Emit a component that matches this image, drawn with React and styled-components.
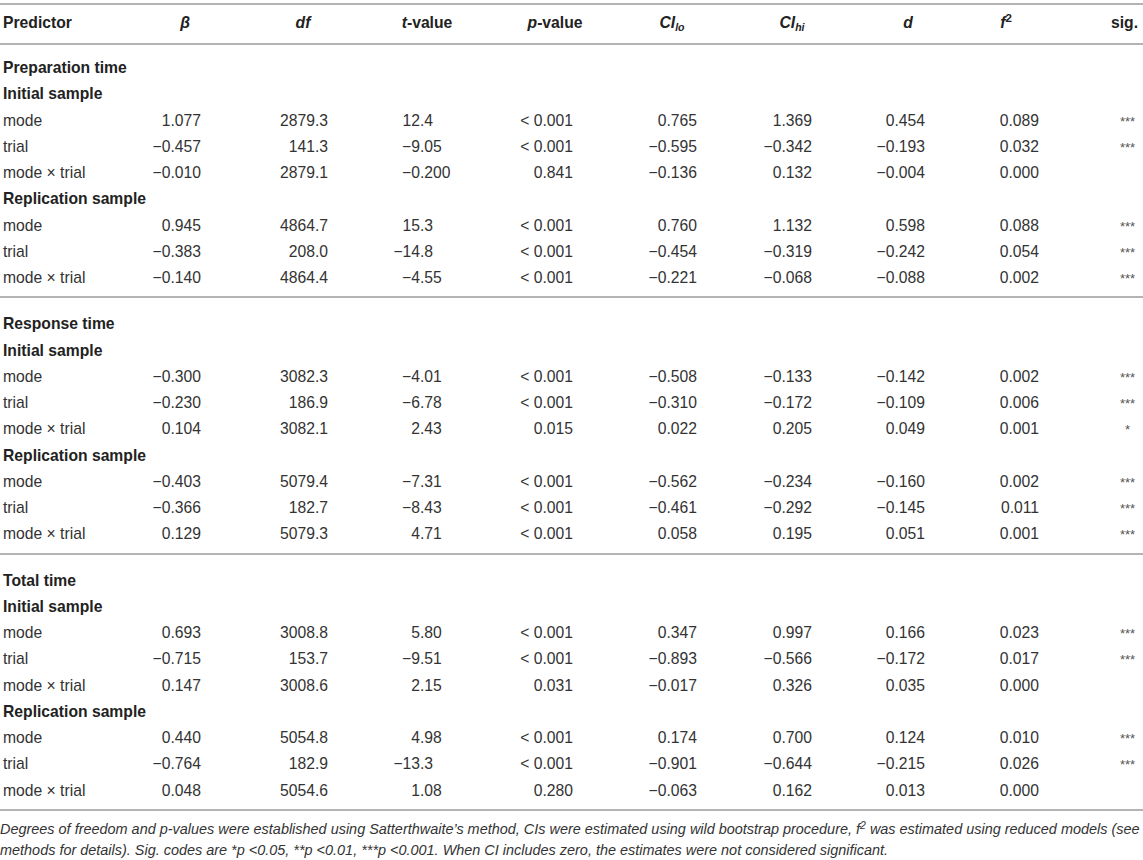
import React from "react";
import styled, { createGlobalStyle } from "styled-components";

const GlobalStyle = createGlobalStyle`
  html, body { margin: 0; padding: 0; background: #ffffff; }
  body {
    font-family: "Liberation Sans", Arial, Helvetica, sans-serif;
    color: #333333;
  }
`;

const Page = styled.div`
  width: 1143px;
  padding-top: 3px;
`;

const Table = styled.table`
  width: 1143px;
  table-layout: fixed;
  border-collapse: collapse;
  border-spacing: 0;
  font-size: 15.7px;
`;

const Head = styled.thead`
  border-top: 2px solid #b4b4b4;
  border-bottom: 2px solid #b4b4b4;
`;

const Section = styled.tbody`
  border-bottom: 2px solid #b4b4b4;
`;

const HeadCell = styled.th`
  padding: 5px ${(p) => p.$pr || 0}px 7px ${(p) => p.$pl || 0}px;
  height: 26px;
  line-height: 26px;
  font-weight: bold;
  color: #222222;
  text-align: ${(p) => p.$align || "center"};
  white-space: nowrap;
`;

const Sym = styled.i`
  font-style: italic;
`;

const Sub = styled.sub`
  font-size: 10.5px;
  font-style: italic;
  vertical-align: -3px;
  line-height: 0;
`;

const Sup = styled.sup`
  font-size: 11.5px;
  vertical-align: 6px;
  line-height: 0;
`;

const Cell = styled.td`
  padding: ${(p) => (p.$top ? p.$top : 0)}px ${(p) => p.$pr || 0}px
    ${(p) => (p.$bottom ? p.$bottom : 0)}px ${(p) => p.$pl || 0}px;
  height: 26.25px;
  line-height: 26.25px;
  text-align: ${(p) => p.$align || "right"};
  white-space: nowrap;
  vertical-align: top;
`;

const GroupCell = styled.td`
  padding: ${(p) => (p.$top ? p.$top : 0)}px 0 0 3px;
  height: 26.25px;
  line-height: 26.25px;
  font-weight: bold;
  color: #222222;
  white-space: nowrap;
  vertical-align: top;
`;

const Decimal = styled.span`
  display: flex;
  height: 26.25px;
`;

const IntPart = styled.span`
  width: 54px;
  text-align: right;
`;

const Stars = styled.span`
  font-size: 13px;
  line-height: 1;
  color: #555555;
`;

const Note = styled.p`
  margin: 8px 0 0 0;
  font-size: 14.45px;
  line-height: 21px;
  font-style: italic;
  color: #333333;
  width: 1143px;
`;

const NoteSup = styled.sup`
  font-size: 10.5px;
  vertical-align: 5px;
  line-height: 0;
`;

const sections = [
  {
    title: "Preparation time",
    groups: [
      {
        name: "Initial sample",
        rows: [
          ["mode", "1.077", "2879.3", "12.4", "< 0.001", "0.765", "1.369", "0.454", "0.089", "***"],
          ["trial", "−0.457", "141.3", "−9.05", "< 0.001", "−0.595", "−0.342", "−0.193", "0.032", "***"],
          ["mode × trial", "−0.010", "2879.1", "−0.200", "0.841", "−0.136", "0.132", "−0.004", "0.000", ""],
        ],
      },
      {
        name: "Replication sample",
        rows: [
          ["mode", "0.945", "4864.7", "15.3", "< 0.001", "0.760", "1.132", "0.598", "0.088", "***"],
          ["trial", "−0.383", "208.0", "−14.8", "< 0.001", "−0.454", "−0.319", "−0.242", "0.054", "***"],
          ["mode × trial", "−0.140", "4864.4", "−4.55", "< 0.001", "−0.221", "−0.068", "−0.088", "0.002", "***"],
        ],
      },
    ],
  },
  {
    title: "Response time",
    groups: [
      {
        name: "Initial sample",
        rows: [
          ["mode", "−0.300", "3082.3", "−4.01", "< 0.001", "−0.508", "−0.133", "−0.142", "0.002", "***"],
          ["trial", "−0.230", "186.9", "−6.78", "< 0.001", "−0.310", "−0.172", "−0.109", "0.006", "***"],
          ["mode × trial", "0.104", "3082.1", "2.43", "0.015", "0.022", "0.205", "0.049", "0.001", "*"],
        ],
      },
      {
        name: "Replication sample",
        rows: [
          ["mode", "−0.403", "5079.4", "−7.31", "< 0.001", "−0.562", "−0.234", "−0.160", "0.002", "***"],
          ["trial", "−0.366", "182.7", "−8.43", "< 0.001", "−0.461", "−0.292", "−0.145", "0.011", "***"],
          ["mode × trial", "0.129", "5079.3", "4.71", "< 0.001", "0.058", "0.195", "0.051", "0.001", "***"],
        ],
      },
    ],
  },
  {
    title: "Total time",
    groups: [
      {
        name: "Initial sample",
        rows: [
          ["mode", "0.693", "3008.8", "5.80", "< 0.001", "0.347", "0.997", "0.166", "0.023", "***"],
          ["trial", "−0.715", "153.7", "−9.51", "< 0.001", "−0.893", "−0.566", "−0.172", "0.017", "***"],
          ["mode × trial", "0.147", "3008.6", "2.15", "0.031", "−0.017", "0.326", "0.035", "0.000", ""],
        ],
      },
      {
        name: "Replication sample",
        rows: [
          ["mode", "0.440", "5054.8", "4.98", "< 0.001", "0.174", "0.700", "0.124", "0.010", "***"],
          ["trial", "−0.764", "182.9", "−13.3", "< 0.001", "−0.901", "−0.644", "−0.215", "0.026", "***"],
          ["mode × trial", "0.048", "5054.6", "1.08", "0.280", "−0.063", "0.162", "0.013", "0.000", ""],
        ],
      },
    ],
  },
];

const widths = [130, 110, 126, 122, 134, 100, 140, 92, 104, 85];
// right padding for right-aligned numeric columns (index 1..8)
const dataPad = { 1: 39, 2: 38, 4: 49, 5: 25, 6: 50, 7: 29, 8: 19 };

function TValue({ value }) {
  const i = value.indexOf(".");
  return (
    <Decimal>
      <IntPart>{value.slice(0, i)}</IntPart>
      <span>{value.slice(i)}</span>
    </Decimal>
  );
}

function DataRow({ row, top, bottom }) {
  return (
    <tr>
      {row.map((v, i) => {
        if (i === 0)
          return (
            <Cell key={i} $align="left" $pl={3} $top={top} $bottom={bottom}>
              {v}
            </Cell>
          );
        if (i === 3)
          return (
            <Cell key={i} $align="left" $top={top} $bottom={bottom}>
              <TValue value={v} />
            </Cell>
          );
        if (i === 9)
          return (
            <Cell key={i} $align="center" $pl={54} $top={top} $bottom={bottom}>
              <Stars>{v}</Stars>
            </Cell>
          );
        return (
          <Cell key={i} $pr={dataPad[i]} $top={top} $bottom={bottom}>
            {v}
          </Cell>
        );
      })}
    </tr>
  );
}

function TableSection({ section, first }) {
  const topPad = first ? 10 : 13;
  return (
    <Section>
      <tr>
        <GroupCell colSpan={10} $top={topPad}>
          {section.title}
        </GroupCell>
      </tr>
      {section.groups.map((g, gi) => (
        <React.Fragment key={gi}>
          <tr>
            <GroupCell colSpan={10}>{g.name}</GroupCell>
          </tr>
          {g.rows.map((r, ri) => (
            <DataRow
              key={ri}
              row={r}
              bottom={gi === section.groups.length - 1 && ri === g.rows.length - 1 ? 5 : 0}
            />
          ))}
        </React.Fragment>
      ))}
    </Section>
  );
}

export default function App() {
  return (
    <Page>
      <GlobalStyle />
      <Table>
        <colgroup>
          {widths.map((w, i) => (
            <col key={i} style={{ width: w }} />
          ))}
        </colgroup>
        <Head>
          <tr>
            <HeadCell $align="left" $pl={3}>Predictor</HeadCell>
            <HeadCell><Sym>β</Sym></HeadCell>
            <HeadCell><Sym>df</Sym></HeadCell>
            <HeadCell><Sym>t</Sym>-value</HeadCell>
            <HeadCell><Sym>p</Sym>-value</HeadCell>
            <HeadCell><Sym>CI</Sym><Sub>lo</Sub></HeadCell>
            <HeadCell><Sym>CI</Sym><Sub>hi</Sub></HeadCell>
            <HeadCell><Sym>d</Sym></HeadCell>
            <HeadCell><Sym>f</Sym><Sup>2</Sup></HeadCell>
            <HeadCell $align="right" $pr={5}>sig.</HeadCell>
          </tr>
        </Head>
        {sections.map((s, i) => (
          <TableSection key={i} section={s} first={i === 0} />
        ))}
      </Table>
      <Note>
        Degrees of freedom and p-values were established using Satterthwaite’s method, CIs were
        estimated using wild bootstrap procedure, f<NoteSup>2</NoteSup> was estimated using reduced
        models (see methods for details). Sig. codes are *p &lt;0.05, **p &lt;0.01, ***p &lt;0.001.
        When CI includes zero, the estimates were not considered significant.
      </Note>
    </Page>
  );
}
